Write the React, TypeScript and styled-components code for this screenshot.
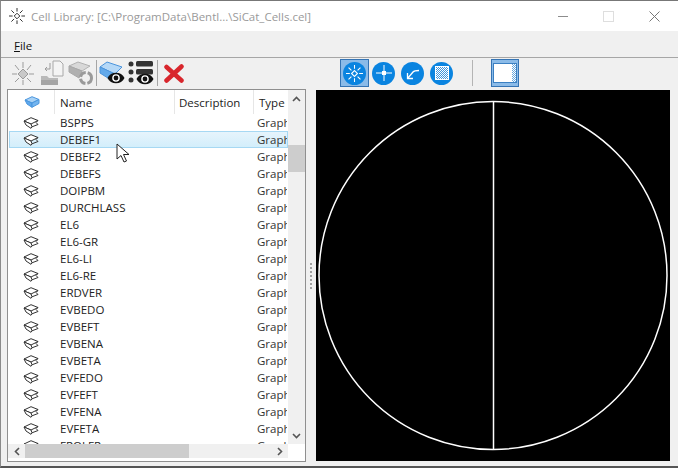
import React from 'react';
import styled, { createGlobalStyle } from 'styled-components';

const CELLS = [
  'BSPPS', 'DEBEF1', 'DEBEF2', 'DEBEFS', 'DOIPBM', 'DURCHLASS', 'EL6', 'EL6-GR', 'EL6-LI', 'EL6-RE',
  'ERDVER', 'EVBEDO', 'EVBEFT', 'EVBENA', 'EVBETA', 'EVFEDO', 'EVFEFT', 'EVFENA', 'EVFETA', 'FROLFR',
];

const SunGlyph = ({ color = '#333', size = 16 }: { color?: string; size?: number }) => (
  <svg width={size} height={size} viewBox="0 0 16 16" fill="none" stroke={color} strokeWidth="1">
    <path d="M8 5.200 10.800 8 8 10.800 5.200 8Z" />
    <path d="M8 0v3.600M8 12.400V16M0 8h3.600M12.400 8H16M2.400 2.400l2.700 2.700M10.900 10.900l2.700 2.700M13.600 2.400l-2.700 2.700M5.100 10.900l-2.700 2.700" />
  </svg>
);

const CellIcon = () => (
  <svg width="16" height="12" viewBox="0 0 16 12" fill="none" stroke="#333" strokeWidth="1" strokeLinejoin="round">
    <path d="M1 4 8 .7 15 3.500 8 7Z" fill="#fff" />
    <path d="M1 4 3 8l5 3.300 1-1.500L8 7Z" fill="#fff" />
    <path d="M9 9.800 15 7.500 13 5.500 15 3.500" />
  </svg>
);

const BlueCell = () => (
  <svg width="16" height="12" viewBox="0 0 16 12" strokeLinejoin="round">
    <path d="M1 4 8 .7 15 3.500 8 7Z" fill="#a9d2f5" stroke="#4a96de" />
    <path d="M1 4 3 8l5 3.300L8 7Z" fill="#5ea8ec" stroke="#4a96de" />
    <path d="M8 11.300 15 7.500V3.500L8 7Z" fill="#74b5ef" stroke="#4a96de" />
  </svg>
);

const Eye = () => (
  <g>
    <path d="M0 6C3-1 14-1 17 6 14 13 3 13 0 6Z" fill="#111" />
    <circle cx="8.500" cy="6" r="3.800" fill="#fff" />
    <circle cx="8.500" cy="6" r="2.400" fill="#111" />
  </g>
);

const CubeEyeIcon = () => (
  <svg width="26" height="25" viewBox="0 0 26 25">
    <path d="M1 6 8 1l15 5-7 7Z" fill="#b5d8f7" stroke="#4b94dc" />
    <path d="M1 6v6l11 7 4-6Z" fill="#62a9ea" stroke="#4b94dc" />
    <g transform="translate(8.500 11)"><Eye /></g>
  </svg>
);

const ListEyeIcon = () => (
  <svg width="26" height="25" viewBox="0 0 26 25" fill="#333">
    <circle cx="3" cy="3" r="2.500" />
    <circle cx="3" cy="11" r="2.500" />
    <circle cx="3" cy="19" r="2.500" />
    <rect x="8" y="0" width="17" height="5.500" rx="1.500" />
    <rect x="8" y="8" width="17" height="5.500" rx="1.500" />
    <g transform="translate(8.500 12)"><Eye /></g>
  </svg>
);

const DisabledSparkIcon = () => (
  <svg width="22" height="24" viewBox="0 0 22 24" fill="none" stroke="#9b9b9b">
    <path d="M11 8 16 13 11 18 6 13Z" fill="#c9c9c9" />
    <path d="M11 1v6M11 19v5M0 13h5M17 13h5M3 4l4 5M19 4l-4 5M3 21l4-4M19 21l-4-4" />
  </svg>
);

const DisabledImportIcon = () => (
  <svg width="24" height="26" viewBox="0 0 24 26">
    <path d="M13 1h7l3 3v12H13Z" fill="#f4f4f4" stroke="#a8a8a8" />
    <path d="M10 3v6H5M7 7 5 9l2 2" fill="none" stroke="#9b9b9b" />
    <path d="M1 16h6l2 2h9v3H1Z" fill="#b9b9b9" />
    <path d="M1 20h17v5H1Z" fill="#a5a5a5" />
  </svg>
);

const DisabledRefreshIcon = () => (
  <svg width="26" height="26" viewBox="0 0 26 26">
    <path d="M1 6 10 2l12 4-8 5Z" fill="#d8d8d8" stroke="#b2b2b2" />
    <path d="M1 6v6l10 6 3-7Z" fill="#b0b0b0" stroke="#a8a8a8" />
    <circle cx="18" cy="18" r="5.500" fill="#f0f0f0" stroke="#9a9a9a" strokeWidth="3" strokeDasharray="7 2" />
  </svg>
);

const DeleteIcon = () => (
  <svg width="20" height="19" viewBox="0 0 20 19">
    <path d="M2.500 3 17.500 16.500M17.500 2.500 2.500 16.500" stroke="#d8262c" strokeWidth="4.500" strokeLinecap="round" />
  </svg>
);

const CrossGlyph = () => (
  <svg width="16" height="16" viewBox="0 0 16 16" stroke="#fff" fill="none">
    <path d="M8 0v6M8 10v6M0 8h6M10 8h6" />
    <rect x="6.500" y="6.500" width="3" height="3" fill="#fff" />
  </svg>
);

const ArrowGlyph = () => (
  <svg width="14" height="14" viewBox="0 0 14 14" stroke="#fff" fill="none" strokeWidth="1.300">
    <path d="M1.500 12.500 7 6c1-1.200 2.500-1.500 6-1.500M1.500 7v5.500H7" />
  </svg>
);

const HatchGlyph = () => (
  <svg width="16" height="16" viewBox="0 0 16 16">
    <defs>
      <pattern id="dither" width="2" height="2" patternUnits="userSpaceOnUse">
        <rect width="2" height="2" fill="#fff" />
        <rect width="1" height="1" fill="#3f95dc" />
        <rect x="1" y="1" width="1" height="1" fill="#3f95dc" />
      </pattern>
    </defs>
    <rect x="1.500" y="1.500" width="13" height="13" fill="url(#dither)" stroke="#fff" />
  </svg>
);

const PanelGlyph = () => (
  <svg width="24" height="20" viewBox="0 0 24 20">
    <defs>
      <pattern id="strip" width="2" height="2" patternUnits="userSpaceOnUse">
        <rect width="2" height="2" fill="#fff" />
        <rect width="1" height="1" fill="#6aa9de" />
        <rect x="1" y="1" width="1" height="1" fill="#6aa9de" />
      </pattern>
    </defs>
    <rect x="0.500" y="0.500" width="23" height="19" fill="#fff" stroke="#3b80c2" />
    <rect x="19" y="1" width="4" height="18" fill="url(#strip)" />
  </svg>
);

const ChevronUp = () => (
  <svg width="9" height="6" viewBox="0 0 9 6" fill="none" stroke="#555" strokeWidth="1.600"><path d="M1 5l3.500-3.500L8 5" /></svg>
);
const ChevronDown = () => (
  <svg width="9" height="6" viewBox="0 0 9 6" fill="none" stroke="#555" strokeWidth="1.600"><path d="M1 1l3.500 3.500L8 1" /></svg>
);
const ChevronLeft = () => (
  <svg width="6" height="9" viewBox="0 0 6 9" fill="none" stroke="#555" strokeWidth="1.600"><path d="M5 1 1.500 4.500 5 8" /></svg>
);
const ChevronRight = () => (
  <svg width="6" height="9" viewBox="0 0 6 9" fill="none" stroke="#555" strokeWidth="1.600"><path d="M1 1l3.500 3.500L1 8" /></svg>
);

export default function App() {
  return (
    <>
      <GlobalStyle />
      <Window>
        <TitleBar>
          <TitleIcon><SunGlyph /></TitleIcon>
          <TitleText>Cell Library: [C:\ProgramData\Bentl...\SiCat_Cells.cel]</TitleText>
          <WindowControls>
            <MinimizeMark />
            <MaximizeMark />
            <CloseMark>
              <svg width="11" height="11" viewBox="0 0 11 11" stroke="#777" fill="none"><path d="M.5.500l10 10M10.500.500l-10 10" /></svg>
            </CloseMark>
          </WindowControls>
        </TitleBar>

        <MenuBar>
          <MenuItem><u>F</u>ile</MenuItem>
        </MenuBar>

        <Toolbar>
          <ToolGroup>
            <ToolButton $width={29}><DisabledSparkIcon /></ToolButton>
            <ToolButton $width={29}><DisabledImportIcon /></ToolButton>
            <ToolButton $width={29}><DisabledRefreshIcon /></ToolButton>
            <ToolSeparator />
            <ToolButton $width={28}><CubeEyeIcon /></ToolButton>
            <ToolButton $width={30}><ListEyeIcon /></ToolButton>
            <ToolSeparator />
            <ToolButton $width={30}><DeleteIcon /></ToolButton>
          </ToolGroup>
          <ViewGroup>
            <ToolButton $width={29} $active><RoundIcon><SunGlyph color="#fff" size={17} /></RoundIcon></ToolButton>
            <ToolButton $width={29}><RoundIcon><CrossGlyph /></RoundIcon></ToolButton>
            <ToolButton $width={29}><RoundIcon><ArrowGlyph /></RoundIcon></ToolButton>
            <ToolButton $width={29}><RoundIcon><HatchGlyph /></RoundIcon></ToolButton>
            <WideSeparator />
            <ToolButton $width={28} $active><PanelGlyph /></ToolButton>
          </ViewGroup>
        </Toolbar>

        <Content>
          <ListPanel>
            <ListArea>
              <HeaderRow>
                <HeaderCell $width={46} $pad={0} $center><BlueCell /></HeaderCell>
                <HeaderCell $width={120} $pad={5}>Name</HeaderCell>
                <HeaderCell $width={79} $pad={4}>Description</HeaderCell>
                <HeaderCell $width={34} $pad={5}>Type</HeaderCell>
              </HeaderRow>
              <Rows>
                {CELLS.map((name) => (
                  <Row key={name} $hover={name === 'DEBEF1'}>
                    <IconCell><CellIcon /></IconCell>
                    <NameCell>{name}</NameCell>
                    <TypeCell>Graphic</TypeCell>
                  </Row>
                ))}
              </Rows>
            </ListArea>
            <VScroll>
              <ScrollButton><ChevronUp /></ScrollButton>
              <VTrack><VThumb /></VTrack>
              <ScrollButton><ChevronDown /></ScrollButton>
            </VScroll>
            <HScroll>
              <HScrollButton><ChevronLeft /></HScrollButton>
              <HTrack><HThumb /></HTrack>
              <HScrollButton><ChevronRight /></HScrollButton>
            </HScroll>
            <ScrollCorner />
            <Pointer viewBox="0 0 16 20" width="16" height="20">
              <path d="M1 1v15l4-3.500 3 6.500 2.500-1-3-6.500H13Z" fill="#fff" stroke="#222" />
            </Pointer>
          </ListPanel>

          <Splitter>
            <GripDot /><GripDot /><GripDot /><GripDot /><GripDot /><GripDot /><GripDot />
          </Splitter>

          <Preview>
            <svg width="354" height="371" viewBox="0 0 354 371" fill="none" stroke="#fff" strokeWidth="1.500">
              <circle cx="177" cy="185.500" r="174" />
              <path d="M177.500 11v349" />
            </svg>
          </Preview>
        </Content>
      </Window>
    </>
  );
}

const GlobalStyle = createGlobalStyle`
  html, body {
    margin: 0;
    padding: 0;
    background: #f0f0f0;
  }
  body {
    font-family: "Open Sans", "Noto Sans", sans-serif;
    font-size: 11.5px;
    color: #1a1a1a;
  }
`;

const Window = styled.div`
  width: 678px;
  height: 468px;
  box-sizing: border-box;
  display: flex;
  flex-direction: column;
  background: #f0f0f0;
  border-top: 1px solid #777;
  border-left: 1px solid #8a8a8a;
  border-bottom: 2px solid #555;
  overflow: hidden;
`;

const TitleBar = styled.div`
  height: 30px;
  flex: none;
  display: flex;
  align-items: center;
  background: #fff;
  padding-left: 8px;
`;

const TitleIcon = styled.div`
  width: 16px;
  height: 16px;
  margin-right: 6px;
`;

const TitleText = styled.div`
  color: #9a9a9a;
  font-size: 11.5px;
  white-space: nowrap;
`;

const WindowControls = styled.div`
  margin-left: auto;
  display: flex;
  align-items: center;
  padding-right: 18px;
  gap: 35px;
`;

const MinimizeMark = styled.div`
  width: 10px;
  height: 1px;
  background: #8c8c8c;
`;

const MaximizeMark = styled.div`
  width: 9px;
  height: 9px;
  border: 1px solid #dedede;
`;

const CloseMark = styled.div`
  width: 11px;
  height: 11px;
  display: flex;
`;

const MenuBar = styled.div`
  height: 27px;
  flex: none;
  display: flex;
  align-items: center;
  padding: 2px 0 0 13px;
  box-sizing: border-box;
  border-bottom: 1px solid #a6a6a6;
`;

const MenuItem = styled.span`
  color: #111;
`;

const Toolbar = styled.div`
  height: 31px;
  box-sizing: border-box;
  flex: none;
  display: flex;
  align-items: flex-start;
  padding: 1px 0 0 7px;
`;

const ToolGroup = styled.div`
  width: 332px;
  flex: none;
  display: flex;
  align-items: center;
`;

const ViewGroup = styled.div`
  display: flex;
  align-items: center;
`;

const ToolButton = styled.div<{ $width: number; $active?: boolean }>`
  width: ${({ $width }) => $width}px;
  height: 28px;
  box-sizing: border-box;
  flex: none;
  display: flex;
  align-items: center;
  justify-content: center;
  background: ${({ $active }) => ($active ? '#8bbbe8' : 'transparent')};
  border: 1px solid ${({ $active }) => ($active ? '#3574b4' : 'transparent')};
`;

const ToolSeparator = styled.div`
  width: 1px;
  height: 26px;
  margin: 0 1px;
  background: #a6a6a6;
`;

const WideSeparator = styled.div`
  width: 1px;
  height: 26px;
  margin: 0 18px 0 16px;
  background: #b4b4b4;
`;

const RoundIcon = styled.div`
  width: 23px;
  height: 23px;
  border-radius: 50%;
  background: #0a84e0;
  display: flex;
  align-items: center;
  justify-content: center;
`;

const Content = styled.div`
  flex: 1;
  min-height: 0;
  display: flex;
  align-items: flex-start;
  padding-left: 6px;
`;

const ListPanel = styled.div`
  position: relative;
  width: 299px;
  height: 373px;
  box-sizing: border-box;
  flex: none;
  display: grid;
  grid-template-columns: 280px 17px;
  grid-template-rows: 354px 17px;
  background: #fff;
  border: 1px solid #8f8f8f;
`;

const ListArea = styled.div`
  overflow: hidden;
  padding-left: 1px;
`;

const HeaderRow = styled.div`
  display: flex;
  height: 24px;
  color: #222;
`;

const HeaderCell = styled.div<{ $width: number; $pad: number; $center?: boolean }>`
  width: ${({ $width }) => $width}px;
  flex: none;
  box-sizing: border-box;
  display: flex;
  align-items: center;
  justify-content: ${({ $center }) => ($center ? 'center' : 'flex-start')};
  padding-left: ${({ $pad }) => $pad}px;
  border-right: 1px solid #e6e6e6;
  white-space: nowrap;
  overflow: hidden;
  &:last-child {
    border-right: none;
  }
`;

const Rows = styled.div`
  display: flex;
  flex-direction: column;
`;

const Row = styled.div<{ $hover?: boolean }>`
  height: 17px;
  flex: none;
  box-sizing: border-box;
  display: flex;
  align-items: center;
  background: ${({ $hover }) => ($hover ? 'linear-gradient(#e6f4fc, #d3eefb)' : 'transparent')};
  border: 1px solid ${({ $hover }) => ($hover ? '#a6d8f3' : 'transparent')};
`;

const IconCell = styled.div`
  width: 45px;
  flex: none;
  display: flex;
  justify-content: center;
  padding-right: 3px;
  box-sizing: border-box;
`;

const NameCell = styled.div`
  width: 198px;
  flex: none;
  padding-left: 5px;
  box-sizing: border-box;
  color: #222;
`;

const TypeCell = styled.div`
  width: 34px;
  flex: none;
  padding-left: 4px;
  box-sizing: border-box;
  overflow: hidden;
  white-space: nowrap;
  color: #333;
`;

const VScroll = styled.div`
  display: flex;
  flex-direction: column;
  background: #f0f0f0;
`;

const HScroll = styled.div`
  display: flex;
  height: 14px;
  background: #f0f0f0;
`;

const ScrollCorner = styled.div`
  background: #fff;
`;

const ScrollButton = styled.div`
  flex: none;
  width: 17px;
  height: 17px;
  display: flex;
  align-items: center;
  justify-content: center;
`;

const HScrollButton = styled(ScrollButton)`
  height: 14px;
`;

const VTrack = styled.div`
  flex: 1;
  padding-top: 38px;
`;

const VThumb = styled.div`
  height: 27px;
  background: #cdcdcd;
`;

const HTrack = styled.div`
  flex: 1;
  display: flex;
`;

const HThumb = styled.div`
  width: 164px;
  background: #cdcdcd;
`;

const Pointer = styled.svg`
  position: absolute;
  left: 108px;
  top: 53px;
`;

const Splitter = styled.div`
  width: 10px;
  height: 373px;
  flex: none;
  display: flex;
  flex-direction: column;
  align-items: center;
  justify-content: center;
  gap: 2px;
`;

const GripDot = styled.div`
  width: 2px;
  height: 2px;
  background: #a0a0a0;
`;

const Preview = styled.div`
  width: 354px;
  height: 371px;
  flex: none;
  margin-top: 1px;
  background: #000;
  display: flex;
`;
